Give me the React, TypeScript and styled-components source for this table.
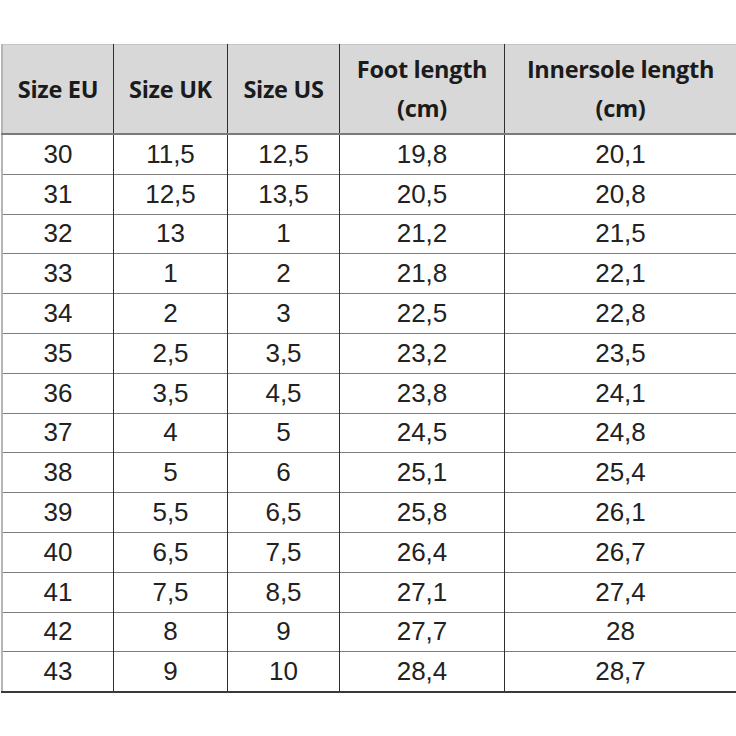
import React from "react";
import styled, { createGlobalStyle } from "styled-components";

const Global = createGlobalStyle`
  html, body { margin: 0; padding: 0; background: #ffffff; }
  body { width: 736px; height: 736px; overflow: hidden; }
`;

const Page = styled.div`
  padding-top: 44px;
  padding-left: 1px;
`;

const Table = styled.table`
  border-collapse: collapse;
  table-layout: fixed;
  width: 733px;
  border-left: 2px solid #b5b5b5;
  border-right: 2px solid #b8b8b8;
  border-top: 1px solid #c4c4c4;
  border-bottom: 2px solid #3a3a3a;
`;

const HeadCell = styled.th<{ $w: number }>`
  width: ${(p) => p.$w}px;
  height: 88px;
  padding: 0;
  background: #d8d8d8;
  color: #1b1b1b;
  font-family: "Open Sans", Lato, sans-serif;
  font-weight: 700;
  font-size: 23.5px;
  letter-spacing: -0.3px;
  line-height: 39px;
  text-align: center;
  vertical-align: middle;
  border-left: 1px solid #2e2e2e;
  border-bottom: 2px solid #7a7a7a;
  &:first-child { border-left: none; }
`;

const Cell = styled.td`
  height: 38.8px;
  padding: 0;
  color: #222;
  font-family: "Liberation Sans", Arial, sans-serif;
  font-size: 26px;
  text-align: center;
  vertical-align: middle;
  border-left: 1px solid #2e2e2e;
  border-top: 1px solid #7d7d7d;
  &:first-child { border-left: none; }
`;

const headers: { label: React.ReactNode; w: number }[] = [
  { label: "Size EU", w: 110 },
  { label: "Size UK", w: 113 },
  { label: "Size US", w: 111 },
  { label: <>Foot length<br />(cm)</>, w: 164 },
  { label: <>Innersole length<br />(cm)</>, w: 231 },
];

const rows: string[][] = [
  ["30", "11,5", "12,5", "19,8", "20,1"],
  ["31", "12,5", "13,5", "20,5", "20,8"],
  ["32", "13", "1", "21,2", "21,5"],
  ["33", "1", "2", "21,8", "22,1"],
  ["34", "2", "3", "22,5", "22,8"],
  ["35", "2,5", "3,5", "23,2", "23,5"],
  ["36", "3,5", "4,5", "23,8", "24,1"],
  ["37", "4", "5", "24,5", "24,8"],
  ["38", "5", "6", "25,1", "25,4"],
  ["39", "5,5", "6,5", "25,8", "26,1"],
  ["40", "6,5", "7,5", "26,4", "26,7"],
  ["41", "7,5", "8,5", "27,1", "27,4"],
  ["42", "8", "9", "27,7", "28"],
  ["43", "9", "10", "28,4", "28,7"],
];

export default function App() {
  return (
    <Page>
      <Global />
      <Table>
        <thead>
          <tr>
            {headers.map((h, i) => (
              <HeadCell key={i} $w={h.w}>{h.label}</HeadCell>
            ))}
          </tr>
        </thead>
        <tbody>
          {rows.map((r, i) => (
            <tr key={i}>
              {r.map((c, j) => (
                <Cell key={j}>{c}</Cell>
              ))}
            </tr>
          ))}
        </tbody>
      </Table>
    </Page>
  );
}
